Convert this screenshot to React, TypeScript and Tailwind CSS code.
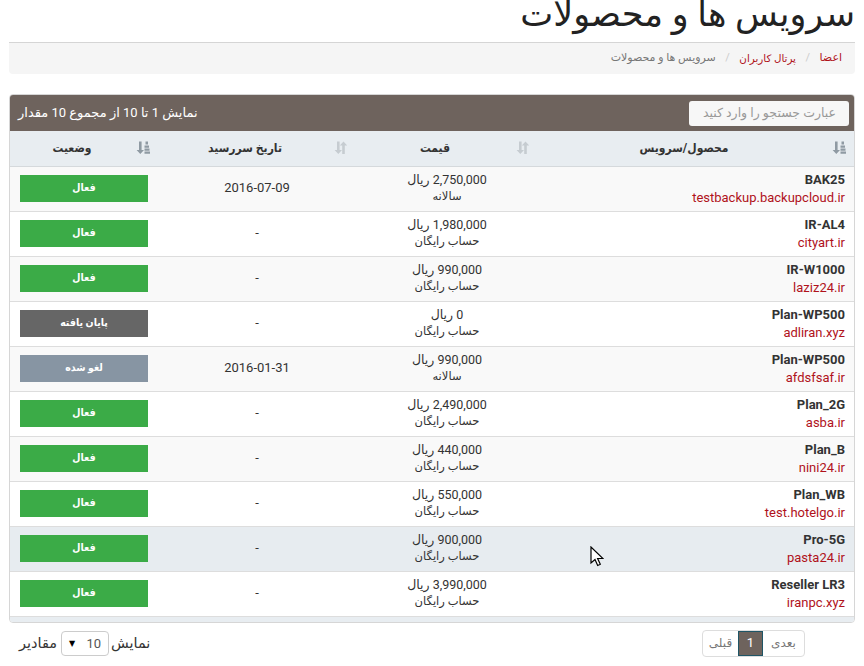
import React from "react";

const rows = [
  ["BAK25", "testbackup.backupcloud.ir", "2,750,000 ریال", "سالانه", "2016-07-09", "فعال"],
  ["IR-AL4", "cityart.ir", "1,980,000 ریال", "حساب رایگان", "-", "فعال"],
  ["IR-W1000", "laziz24.ir", "990,000 ریال", "حساب رایگان", "-", "فعال"],
  ["Plan-WP500", "adliran.xyz", "0 ریال", "حساب رایگان", "-", "پایان یافته"],
  ["Plan-WP500", "afdsfsaf.ir", "990,000 ریال", "سالانه", "2016-01-31", "لغو شده"],
  ["Plan_2G", "asba.ir", "2,490,000 ریال", "حساب رایگان", "-", "فعال"],
  ["Plan_B", "nini24.ir", "440,000 ریال", "حساب رایگان", "-", "فعال"],
  ["Plan_WB", "test.hotelgo.ir", "550,000 ریال", "حساب رایگان", "-", "فعال"],
  ["Pro-5G", "pasta24.ir", "900,000 ریال", "حساب رایگان", "-", "فعال"],
  ["Reseller LR3", "iranpc.xyz", "3,990,000 ریال", "حساب رایگان", "-", "فعال"],
];

const condensed = { fontFamily: 'Roboto, "DejaVu Sans Condensed", "DejaVu Sans", sans-serif' };

function SortIcon({ bars }: { bars: boolean }) {
  return (
    <svg width="14" height="15" viewBox="0 0 14 14" className={bars ? "text-[#8f9aa3]" : "text-[#c6ccd1]"} fill="currentColor">
      <path d="M3 1h2.600v8.500H8L4.300 13.500.6 9.500H3z" />
      {bars ? (
        <path d="M9.500 1h2.500v3H9.500zM8.500 5h4.500v2.200H8.500zM8.500 8h5v2.200h-5zM8.500 11h5.500v2.200H8.500z" />
      ) : (
        <path d="M10.800 13.500H8.200V5H5.800l3.700-4 3.700 4h-2.400z" />
      )}
    </svg>
  );
}

function Th({ label, bars, w }: { label: string; bars?: boolean; w: string }) {
  return (
    <th
      style={condensed}
      className={`${w} relative h-[35px] border-b border-[#d5d9dc] p-0 pr-[24px] text-center align-middle text-[12px] font-bold text-[#333]`}
    >
      <span className="absolute right-[8px] top-[9px]">
        <SortIcon bars={!!bars} />
      </span>
      {label}
    </th>
  );
}

function Status({ s }: { s: string }) {
  const bg = s === "فعال" ? "bg-[#3bab47]" : s === "پایان یافته" ? "bg-[#666666]" : "bg-[#8795a3]";
  return (
    <span
      style={condensed}
      className={`mx-auto block h-[27px] w-[128px] ${bg} text-center text-[10.5px] font-bold leading-[25px] text-white`}
    >
      {s}
    </span>
  );
}

export default function App() {
  return (
    <div
      dir="rtl"
      className="h-[666px] w-[864px] overflow-hidden bg-white px-[9px] text-[#333]"
      style={{ fontFamily: 'Roboto, "DejaVu Sans", sans-serif' }}
    >
      <h1 className="h-[43px] border-b border-[#d5d5d5] pr-0 text-[35px] font-normal leading-[30px] text-[#222]">
        سرویس ها و محصولات
      </h1>
      <nav className="flex h-[31px] w-[846px] items-center rounded-b-[4px] bg-[#f5f5f5] pr-[13px] text-[11px]">
        <span className="text-[#b0121b]">اعضا</span>
        <span className="px-[9.5px] text-[#ccc]">/</span>
        <span className="text-[10.3px] text-[#b0121b]">پرتال کاربران</span>
        <span className="px-[9.5px] text-[#ccc]">/</span>
        <span className="text-[#777]">سرویس ها و محصولات</span>
      </nav>

      <section className="mt-[20px] w-[846px] overflow-hidden rounded-[4px] border border-[#d6d6d6] bg-white">
        <div className="flex h-[36px] items-center justify-between bg-[#6e635d] pl-[8px] pr-[5px] text-[13px] text-white">
          <div className="flex h-[25px] w-[160px] items-center rounded-[3px] bg-[#f7f7f7] pr-[13px] text-[12.5px] text-[#999]">
            عبارت جستجو را وارد کنید
          </div>
          <span>نمایش 1 تا 10 از مجموع 10 مقدار</span>
        </div>
        <table className="w-[844px] table-fixed border-collapse">
          <thead className="bg-[#e8edf1]">
            <tr>
              <Th label="محصول/سرویس" bars w="w-[316px]" />
              <Th label="قیمت" w="w-[182px]" />
              <Th label="تاریخ سررسید" w="w-[198px]" />
              <Th label="وضعیت" bars w="w-[148px]" />
            </tr>
          </thead>
          <tbody>
            {rows.map((r, i) => (
              <tr
                key={i}
                className={`h-[45px] border-b border-[#dddddd] ${
                  i === 8 ? "bg-[#e7ecf0]" : i % 2 === 0 ? "bg-[#f9f9f9]" : "bg-white"
                }`}
              >
                <td className="pr-[9px] pl-0 align-middle text-right text-[13px] leading-[18px]">
                  <div dir="ltr" className="font-bold text-[#333]">{r[0]}</div>
                  <div dir="ltr" className="text-[#b0121b]">{r[1]}</div>
                </td>
                <td className="pb-[2px] text-center align-middle leading-[17px] text-[#333]">
                  <div className="text-[12.5px]">{r[2]}</div>
                  <div className="text-[11.5px]">{r[3]}</div>
                </td>
                <td className="pb-[2px] text-center align-middle text-[13px] text-[#333]">{r[4]}</td>
                <td className="align-middle">
                  <Status s={r[5]} />
                </td>
              </tr>
            ))}
          </tbody>
        </table>
        <div className="h-[5px] bg-[#e8edf1]" />
      </section>

      <div className="mt-[7px] flex h-[27px] w-[846px] items-center justify-between">
        <div className="mr-[50px] flex h-[27px] items-center overflow-hidden rounded-[4px] border border-[#dddddd] text-[12px] text-[#777]">
          <span className="flex h-full w-[41px] items-center justify-center">بعدی</span>
          <span className="flex h-full w-[25px] items-center justify-center border border-[#1f5566] bg-[#6e635d] text-[13px] text-white">1</span>
          <span className="flex h-full w-[35px] items-center justify-center">قبلی</span>
        </div>
        <div className="ml-[10px] mt-[1px] flex items-center text-[14.5px] text-[#333]">
          <span>نمایش</span>
          <span dir="ltr" className="ml-[4px] mr-[2px] flex h-[25px] w-[48px] items-center justify-between rounded-[4px] border border-[#cccccc] pl-[7px] pr-[7px] text-[13px] text-[#555]">
            <span className="text-[8px] text-black">▼</span>
            <span>10</span>
          </span>
          <span>مقادیر</span>
        </div>
      </div>

      <svg className="absolute left-[590px] top-[546px]" width="14" height="22" viewBox="0 0 14 22">
        <path d="M1 1v16l4-3.500 2.700 6 2.600-1.200-2.700-5.800H13z" fill="#fff" stroke="#000" strokeWidth="1.2" />
      </svg>
    </div>
  );
}
